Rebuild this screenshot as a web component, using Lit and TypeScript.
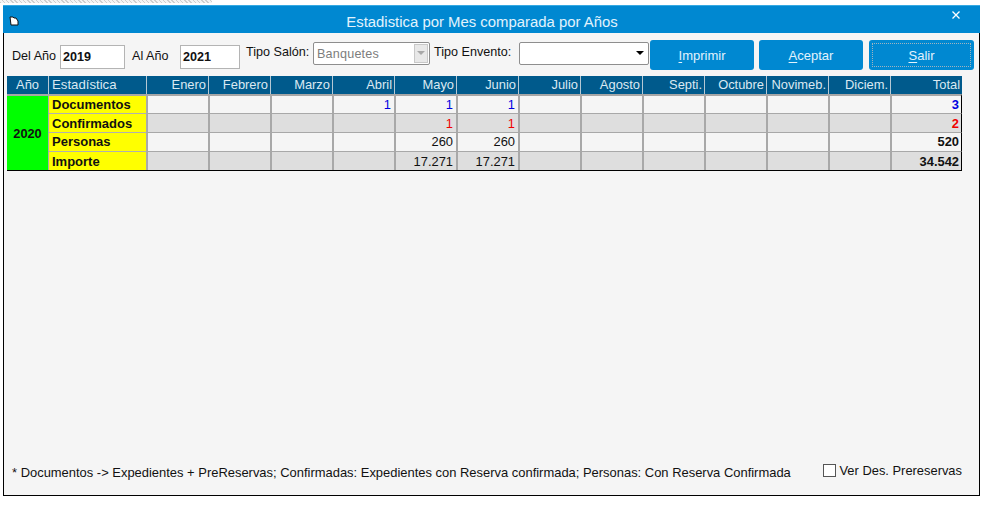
import { LitElement, html, css } from "lit";
import { customElement } from "lit/decorators.js";

const MONTHS = ["Enero","Febrero","Marzo","Abril","Mayo","Junio","Julio","Agosto","Septi.","Octubre","Novimeb.","Diciem."];
type Row = { name: string; cls: string; vals: Record<number,string>; total: string };
const ROWS: Row[] = [
  { name: "Documentos", cls: "blue", vals: {3:"1",4:"1",5:"1"}, total: "3" },
  { name: "Confirmados", cls: "red", vals: {4:"1",5:"1"}, total: "2" },
  { name: "Personas", cls: "", vals: {4:"260",5:"260"}, total: "520" },
  { name: "Importe", cls: "", vals: {4:"17.271",5:"17.271"}, total: "34.542" },
];

@customElement("app-root")
export class AppRoot extends LitElement {
  static styles = css`
    :host { display: block; width: 984px; height: 505px; background: #fff; font-family: "Liberation Sans", Arial, sans-serif; font-size: 12.95px; color: #111; overflow: hidden; }
    .noise { height: 3px; width: 212px; background: repeating-linear-gradient(45deg, #cfcfcf 0 1px, #f4f4f4 1px 3px); }
    .page { padding: 2px 4px 9px 3px; height: 502px; box-sizing: border-box; }
    .win { height: 100%; box-sizing: border-box; display: flex; flex-direction: column; background: #f5f5f5; border: 1px solid #000; border-top: 0; }
    .title { height: 28px; box-sizing: border-box; flex: none; background: #0088d1; border-top: 1px solid #35a9e2; color: #fff; display: grid; grid-template-columns: 30px 1fr 29px; align-items: center; margin: 0 -1px; }
    .title .t { text-align: center; font-size: 14.9px; color: #e2f3fd; padding-right: 20px; margin-top: 5px; }
    .title svg { display: block; }
    .ico { margin: 5px 0 0 6px; }
    .x { margin: -9px 0 0 0; }
    .bar { height: 43px; flex: none; display: flex; align-items: flex-start; padding: 7px 0 0 8px; box-sizing: border-box; font-size: 12.6px; }
    .lbl { line-height: 14px; white-space: nowrap; }
    .l-del { margin-top: 9px; width: 48px; }
    .l-al { margin: 9px 0 0 7px; width: 48px; }
    .l-sal { margin: 5px 0 0 6px; width: 67px; }
    .l-env { margin: 5px 0 0 4px; width: 85px; }
    .inp { box-sizing: border-box; height: 24px; background: #fff; border: 1px solid #b4b4b4; font-weight: bold; font-size: 12.6px; display: flex; align-items: center; padding-left: 2px; margin-top: 5px; }
    .w65 { width: 65px; }
    .w60 { width: 60px; }
    .sel { box-sizing: border-box; height: 23px; margin-top: 2px; border: 1px solid #8e8e8e; border-radius: 2px; background: #fff; display: flex; align-items: center; }
    .s-sal { width: 117px; }
    .s-env { width: 130px; justify-content: flex-end; }
    .s-env svg { margin-right: 4px; }
    .sel .v { flex: 1; color: #7d7d7d; padding-left: 3px; letter-spacing: .2px; }
    .sel .arr { width: 14px; height: 19px; margin-right: 1px; background: #e8e8e8; border: 1px solid #c8c8c8; box-sizing: border-box; display: flex; align-items: center; justify-content: center; }
    .btn { box-sizing: border-box; width: 104px; height: 30px; background: #0088d1; color: #e2f3fd; border-radius: 3px; display: flex; align-items: center; justify-content: center; font-size: 13px; margin-left: 5px; }
    .btn.first { margin-left: 1px; }
    .btn.focus { position: relative; width: 105px; margin-left: 6px; }
    .btn.focus::after { content: ""; position: absolute; inset: 3px; border: 1px dotted #9fb4c0; }
    .btn u { text-underline-offset: 2px; }
    .grid { margin-left: 3px; width: 955px; display: grid; grid-template-columns: 42px 98px repeat(12, 62px) 71px; grid-template-rows: 18px 20px 19px 19px 18px; border-bottom: 1px solid #000; flex: none; font-size: 12.9px; }
    .h { background: #005a8c; color: #dbe9f2; line-height: 18px; text-align: right; padding-right: 2px; border-right: 1px solid #b5c8d4; box-sizing: border-box; white-space: nowrap; overflow: hidden; }
    .h.l { text-align: left; padding-left: 3px; font-size: 13.2px; }
    .h.c { text-align: center; padding: 0; }
    .h.end { border-right: 0; }
    .year { grid-row: 2 / span 4; background: #00ff00; font-size: 12.8px; font-weight: bold; display: flex; align-items: center; justify-content: center; border-top: 2px solid #a6a6a6; border-right: 1px solid #aaa; box-sizing: border-box; padding-top: 1px; }
    .name { background: #ffff00; font-weight: bold; font-size: 13px; padding-left: 3px; box-sizing: border-box; line-height: 18px; border-bottom: 1px solid #b0b0b0; border-right: 1px solid #aaa; white-space: nowrap; }
    .cell { box-sizing: border-box; text-align: right; padding-right: 3px; line-height: 18px; border-bottom: 1px solid #a8a8a8; border-right: 1px solid #a8a8a8; border-left: 1px solid #a8a8a8; }
    .top { border-top: 2px solid #a6a6a6; line-height: 17px; }
    .odd { background: #f5f5f5; }
    .even { background: #dedede; }
    .low { line-height: 20px; }
    .last { border-bottom: 0; }
    .total { font-weight: bold; padding-right: 2px; border-right: 1px solid #000; }
    .blue { color: #0000e0; }
    .red { color: #f00000; }
    .spacer { flex: 1; }
    .foot { flex: none; height: 30px; display: flex; align-items: flex-start; padding: 0 17px 0 8px; justify-content: space-between; line-height: 15px; }
    .chk { display: flex; align-items: flex-start; gap: 3px; margin-top: -2px; font-size: 12.9px; }
    .box { width: 13px; height: 13px; box-sizing: border-box; border: 1px solid #555; background: #fff; margin-top: 1px; }
  `;

  render() {
    return html`<div class="noise"></div><div class="page"><div class="win">
      <div class="title">
        <svg class="ico" width="12" height="12" viewBox="0 0 12 12"><path d="M1 1h3l1 1h2l2 3v4H2z" fill="#fff" stroke="#111" stroke-width="1"/></svg>
        <div class="t">Estadistica por Mes comparada por Años</div>
        <svg class="x" width="10" height="10" viewBox="0 0 10 10"><path d="M1.5 1.5l7 7M8.5 1.5l-7 7" stroke="#fff" stroke-width="1.3"/></svg>
      </div>
      <div class="bar">
        <span class="lbl l-del">Del Año</span>
        <span class="inp w65">2019</span>
        <span class="lbl l-al">Al Año</span>
        <span class="inp w60">2021</span>
        <span class="lbl l-sal">Tipo Salón:</span>
        <span class="sel s-sal"><span class="v">Banquetes</span><span class="arr"><svg width="8" height="5"><path d="M0 0h8L4 4z" fill="#a8a8a8"/></svg></span></span>
        <span class="lbl l-env">Tipo Envento:</span>
        <span class="sel s-env"><svg width="8" height="5"><path d="M0 0h8L4 4z" fill="#000"/></svg></span>
        <span class="btn first"><span><u>I</u>mprimir</span></span>
        <span class="btn"><span><u>A</u>ceptar</span></span>
        <span class="btn focus"><span><u>S</u>alir</span></span>
      </div>
      <div class="grid">
        <div class="h c">Año</div>
        <div class="h l">Estadística</div>
        ${MONTHS.map(m => html`<div class="h">${m}</div>`)}
        <div class="h end">Total</div>
        <div class="year">2020</div>
        ${ROWS.map((r, i) => {
          const bg = i % 2 ? "even" : "odd";
          const mod = `${i === 0 ? "top" : ""} ${i === 3 ? "last" : ""} ${i % 2 ? "low" : ""}`;
          return html`
            <div class="name ${mod}">${r.name}</div>
            ${MONTHS.map((_, j) => html`<div class="cell ${bg} ${mod} ${r.cls}">${r.vals[j] ?? ""}</div>`)}
            <div class="cell total ${bg} ${mod} ${r.cls}">${r.total}</div>`;
        })}
      </div>
      <div class="spacer"></div>
      <div class="foot">
        <span>* Documentos -&gt; Expedientes + PreReservas; Confirmadas: Expedientes con Reserva confirmada; Personas: Con Reserva Confirmada</span>
        <span class="chk"><span class="box"></span><span>Ver Des. Prereservas</span></span>
      </div>
    </div></div>`;
  }
}
